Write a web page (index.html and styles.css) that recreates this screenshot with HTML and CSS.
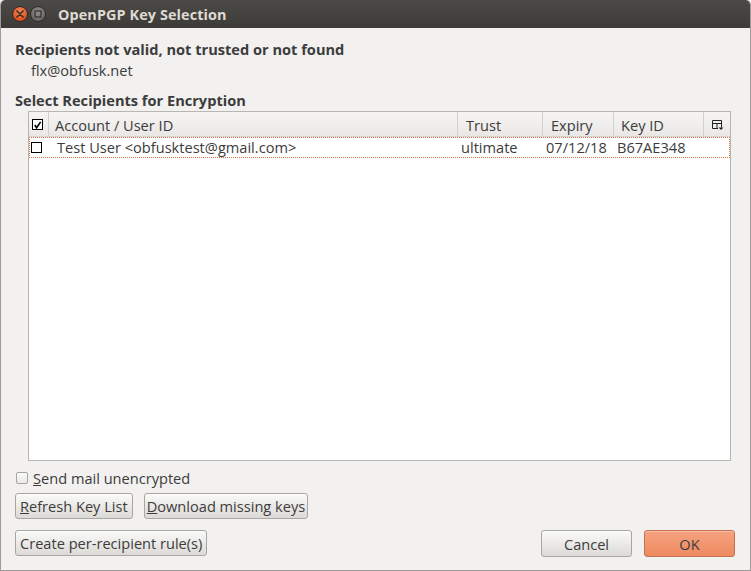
FILE: index.html
```html
<!DOCTYPE html>
<html>
<head>
<meta charset="utf-8">
<link rel="stylesheet" href="styles.css">
</head>
<body>
<div class="window">
  <div class="titlebar">
    <div class="wbtn close"><svg width="8" height="8" viewBox="0 0 8 8"><path d="M1 1L7 7M7 1L1 7" stroke="#3a2a22" stroke-width="1.6" stroke-linecap="round"/></svg></div>
    <div class="wbtn maxi"><svg width="8" height="8" viewBox="0 0 8 8"><rect x="1" y="1" width="6" height="6" fill="none" stroke="#3c3b37" stroke-width="1.4"/></svg></div>
    <div class="title">OpenPGP Key Selection</div>
  </div>
  <div class="content">
    <div class="heading h1">Recipients not valid, not trusted or not found</div>
    <div class="addr">flx@obfusk.net</div>
    <div class="heading h2">Select Recipients for Encryption</div>
    <div class="table">
      <div class="row head">
        <div class="cell c0"><span class="cb checked"><svg width="10" height="10" viewBox="0 0 10 10"><path d="M2 5L4 8L8.5 1.5" fill="none" stroke="#000" stroke-width="1.8"/></svg></span></div>
        <div class="cell c1">Account / User ID</div>
        <div class="cell c2">Trust</div>
        <div class="cell c3">Expiry</div>
        <div class="cell c4">Key ID</div>
        <div class="cell c5"><svg width="12" height="11" viewBox="0 0 12 11"><path d="M0.5 0.5H9.5V7.5M0.5 0.5V8.5H6M0.5 3.5H9.5M5 3.5V8.5" fill="none" stroke="#222" stroke-width="1"/><path d="M6.5 7.5H11.5L9 10Z" fill="#222"/></svg></div>
      </div>
      <div class="row data">
        <div class="cell c0"><span class="cb"></span></div>
        <div class="cell c1">Test User &lt;obfusktest@gmail.com&gt;</div>
        <div class="cell c2">ultimate</div>
        <div class="cell c3">07/12/18</div>
        <div class="cell c4">B67AE348</div>
        <div class="cell c5"></div>
      </div>
    </div>
    <label class="check"><span class="gcb"></span><span><u>S</u>end mail unencrypted</span></label>
    <div class="btnrow r1">
      <div class="btn"><u>R</u>efresh Key List</div>
      <div class="btn dl"><u>D</u>ownload missing keys</div>
    </div>
    <div class="btnrow r2">
      <div class="btn">Create per-recipient rule(s)</div>
      <div class="spacer"></div>
      <div class="btn wide">Cancel</div>
      <div class="btn wide ok">OK</div>
    </div>
  </div>
</div>
</body>
</html>
```

FILE: styles.css
```css
html, body {
  margin: 0;
  padding: 0;
  background: #f2f1f0;
}
body {
  font-family: "Open Sans", "DejaVu Sans", sans-serif;
  font-size: 14.6px;
  color: #3c3c3c;
}
.window {
  width: 751px;
  height: 571px;
  box-sizing: border-box;
  border-left: 1px solid #9d9c99;
  border-right: 1px solid #9d9c99;
  border-bottom: 1px solid #9d9c99;
  display: flex;
  flex-direction: column;
  background: #f2f1f0;
  overflow: hidden;
  border-top-left-radius: 5px;
  border-top-right-radius: 5px;
}
.titlebar {
  height: 28px;
  flex: none;
  background: linear-gradient(#4b4a46, #3c3b37);
  display: flex;
  align-items: center;
  padding-left: 12px;
  margin-left: -1px;
  margin-right: -1px;
  border-top-left-radius: 5px;
  border-top-right-radius: 5px;
}
.wbtn {
  width: 16px;
  height: 16px;
  border-radius: 50%;
  box-sizing: border-box;
  display: flex;
  align-items: center;
  justify-content: center;
  margin-right: 2px;
}
.close {
  background: radial-gradient(circle at 50% 35%, #f68b5d, #e0501d 70%);
  border: 1px solid #2c2b28;
}
.maxi {
  background: radial-gradient(circle at 50% 35%, #8e8d89, #6c6b67 70%);
  border: 1px solid #2c2b28;
}
.title {
  margin-left: 10px;
  font-weight: bold;
  color: #dfdbd2;
  font-size: 14.4px;
  letter-spacing: 0.1px;
}
.content {
  flex: 1;
  display: flex;
  flex-direction: column;
  padding: 0 15px 0 14px;
}
.heading {
  font-weight: bold;
  line-height: 18px;
}
.h1 {
  margin-top: 12px;
}
.addr {
  margin-top: 3px;
  margin-left: 16px;
  line-height: 18px;
}
.h2 {
  margin-top: 12px;
}
.table {
  margin-top: 2px;
  margin-left: 13px;
  width: 703px;
  height: 350px;
  box-sizing: border-box;
  border: 1px solid #b8b6b2;
  background: #fff;
}
.row {
  display: grid;
  grid-template-columns: 19px 409px 85px 71px 90px 27px;
}
.head {
  height: 25px;
  background: linear-gradient(#f6f5f4, #e9e8e6);
  border-bottom: 1px solid #d6d4d1;
  box-sizing: border-box;
}
.head .cell {
  display: flex;
  align-items: center;
  border-left: 1px solid #d3d1ce;
  padding-left: 8px;
  padding-top: 2px;
  line-height: 22px;
}
.head .c0 {
  border-left: none;
  padding-left: 3px;
  padding-top: 1px;
}
.head .c1 { padding-left: 6px; }
.head .c4 { padding-left: 7px; }
.head .c5 { padding-left: 8px; padding-top: 2px; }
.cb {
  width: 11px;
  height: 11px;
  box-sizing: border-box;
  border: 1px solid #000;
  background: #fff;
  display: inline-flex;
  align-items: center;
  justify-content: center;
}
.cb svg { display: block; }
.data {
  height: 21px;
  box-sizing: border-box;
  border: 1px dotted #e2753f;
}
.data .cell {
  display: flex;
  align-items: center;
  padding-left: 3px;
  line-height: 19px;
  white-space: nowrap;
}
.data .c0 { padding-left: 1px; }
.data .c1 { padding-left: 8px; }
.check {
  display: flex;
  align-items: center;
  margin-top: 8px;
  margin-left: 1px;
  line-height: 18px;
}
.gcb {
  width: 12px;
  height: 12px;
  box-sizing: border-box;
  border: 1px solid #a7a59f;
  border-radius: 2px;
  background: linear-gradient(#fbfbfa, #ebeae8);
  margin-right: 5px;
}
.btnrow {
  display: flex;
  gap: 13px;
}
.r1 { margin-top: 6px; }
.r2 { margin-top: 11px; gap: 12px; }
.spacer { flex: 1; }
.btn {
  height: 26px;
  box-sizing: border-box;
  border: 1px solid #a8a6a2;
  border-radius: 3px;
  background: linear-gradient(#fafaf9, #dcdad6);
  padding: 0 4px;
  display: flex;
  align-items: center;
  justify-content: center;
  white-space: nowrap;
  box-shadow: inset 0 1px 0 #fff;
}
.r1 .btn.dl {
  margin-left: -2px;
  padding: 0 2px;
}
.btn.wide {
  width: 91px;
  height: 27px;
}
.btn.ok {
  background: linear-gradient(#f5a27f, #ee8a61);
  border-color: #c57250;
  box-shadow: inset 0 1px 0 #f8bfa5;
}
```
